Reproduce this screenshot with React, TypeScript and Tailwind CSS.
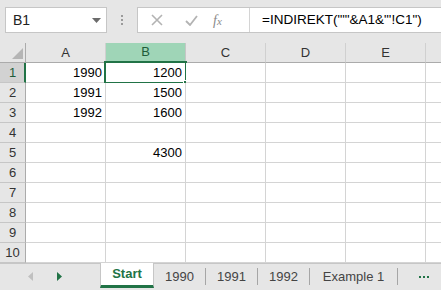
import { ReactNode } from "react";

const cols = ["A", "B", "C", "D", "E", "F"];
const data: Record<number, Record<string, string>> = {
  1: { A: "1990", B: "1200" },
  2: { A: "1991", B: "1500" },
  3: { A: "1992", B: "1600" },
  5: { B: "4300" },
};

function Cell({ children, selected }: { children?: ReactNode; selected?: boolean }) {
  return (
    <div className="relative h-[20px] border-r border-b border-[#d4d4d4] bg-white flex items-center justify-end pr-[3px] text-[13px] text-black">
      {children}
      {selected && (
        <div className="absolute -left-[2px] -top-[2px] w-[83px] h-[23px] border-2 border-[#217346]">
          <div className="absolute -right-[4px] -bottom-[4px] w-[6px] h-[6px] bg-[#217346] border border-white" />
        </div>
      )}
    </div>
  );
}

export default function App() {
  return (
    <div
      className="w-[441px] h-[290px] bg-[#e6e6e6] overflow-hidden flex flex-col"
      style={{ fontFamily: '"Liberation Sans", Arial, sans-serif' }}
    >
      {/* formula bar */}
      <div className="h-[43px] flex items-start pt-[7px] pl-[5px] shrink-0">
        <div className="w-[102px] h-[26px] border border-[#c6c6c6] bg-white flex items-center justify-between pl-[7px] pr-[5px] text-[14px] text-[#222]">
          <span>B1</span>
          <svg width="9" height="5" viewBox="0 0 9 5"><path d="M0 0h9L4.5 5z" fill="#6b6b6b" /></svg>
        </div>
        <div className="w-[30px] h-[26px] flex flex-col items-center justify-center gap-[2px]">
          <div className="w-[2px] h-[2px] bg-[#9a9a9a]" />
          <div className="w-[2px] h-[2px] bg-[#9a9a9a]" />
          <div className="w-[2px] h-[2px] bg-[#9a9a9a]" />
        </div>
        <div className="flex-1 h-[26px] border-y border-l border-[#c6c6c6] bg-white flex items-center">
          <div className="w-[111px] flex items-center h-full">
            <svg className="ml-[13px]" width="12" height="12" viewBox="0 0 12 12">
              <path d="M1 1L11 11M11 1L1 11" stroke="#b3b3b3" strokeWidth="1.6" />
            </svg>
            <svg className="ml-[22px]" width="13" height="11" viewBox="0 0 13 11">
              <path d="M1 6l4 4 7-9" stroke="#b3b3b3" strokeWidth="1.8" fill="none" />
            </svg>
            <span
              className="ml-[15px] text-[14px] italic text-[#8a8a8a]"
              style={{ fontFamily: '"Liberation Serif", serif' }}
            >
              f<span className="text-[11px]">x</span>
            </span>
          </div>
          <div className="h-full border-l border-[#d4d4d4] flex items-center pl-[12px] text-[13.5px] text-black whitespace-nowrap">
            =INDIREKT("'"&amp;A1&amp;"'!C1")
          </div>
        </div>
      </div>

      {/* grid */}
      <div className="grid grid-cols-[26px_80px_80px_80px_80px_80px_80px] shrink-0">
        <div className="h-[20px] border-r border-b border-[#ababab] bg-[#e6e6e6] relative">
          <svg className="absolute right-[2px] bottom-[3px]" width="11" height="11" viewBox="0 0 11 11">
            <path d="M11 0V11H0z" fill="#b5b5b5" />
          </svg>
        </div>
        {cols.map((c) =>
          c === "B" ? (
            <div
              key={c}
              className="h-[20px] border-r border-b-2 border-r-[#c6c6c6] border-b-[#217346] bg-[#9fd5b7] flex items-center justify-center text-[13px] text-[#1e5c3a]"
            >
              {c}
            </div>
          ) : (
            <div
              key={c}
              className="h-[20px] border-r border-b border-r-[#d0d0d0] border-b-[#ababab] bg-[#e6e6e6] flex items-center justify-center text-[13px] text-[#333]"
            >
              {c === "F" ? "" : c}
            </div>
          )
        )}
        {Array.from({ length: 10 }, (_, i) => i + 1).map((r) => (
          <div key={r} className="contents">
            {r === 1 ? (
              <div className="h-[20px] border-r-2 border-b border-r-[#217346] border-b-[#c6c6c6] bg-[#d2d2d2] flex items-center justify-center pl-[1px] text-[13px] text-[#1e5c3a]">
                {r}
              </div>
            ) : (
              <div className="h-[20px] border-r border-b border-r-[#ababab] border-b-[#c6c6c6] bg-[#e6e6e6] flex items-center justify-center text-[13px] text-[#333]">
                {r}
              </div>
            )}
            {cols.map((c) => (
              <Cell key={c} selected={r === 1 && c === "B"}>
                {data[r]?.[c]}
              </Cell>
            ))}
          </div>
        ))}
      </div>

      {/* sheet tabs */}
      <div className="flex-1 border-t border-[#c6c6c6] flex items-start text-[13px] text-[#444]">
        <div className="w-[100px] h-[25px] flex items-center">
          <svg className="ml-[28px]" width="5" height="9" viewBox="0 0 5 9"><path d="M5 0V9L0 4.5z" fill="#c0c0c0" /></svg>
          <svg className="ml-[24px]" width="5" height="9" viewBox="0 0 5 9"><path d="M0 0V9L5 4.5z" fill="#217346" /></svg>
        </div>
        <div className="w-[54px] h-[25px] -mt-px bg-white border-x border-[#c6c6c6] border-b-[3px] border-b-[#217346] flex items-center justify-center font-bold text-[#217346]">
          Start
        </div>
        {["1990", "1991", "1992"].map((t) => (
          <div key={t} className="flex items-center h-[25px]">
            <div className="w-[51px] flex justify-center">{t}</div>
            <div className="w-px h-[17px] bg-[#a6a6a6]" />
          </div>
        ))}
        <div className="flex items-center h-[25px]">
          <div className="w-[87px] flex justify-center">Example 1</div>
          <div className="w-px h-[17px] bg-[#a6a6a6]" />
        </div>
        <div className="flex items-center h-[25px] pl-[21px] gap-[2px]">
          <div className="w-[2px] h-[2px] bg-[#217346]" />
          <div className="w-[2px] h-[2px] bg-[#217346]" />
          <div className="w-[2px] h-[2px] bg-[#217346]" />
        </div>
      </div>
    </div>
  );
}
